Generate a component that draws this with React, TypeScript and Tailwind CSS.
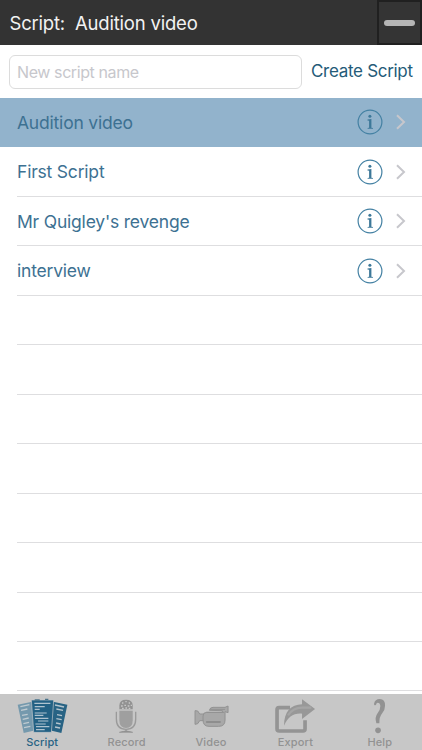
import type { ReactNode } from "react";

const scripts = ["Audition video", "First Script", "Mr Quigley's revenge", "interview"];
const emptyRows = Array.from({ length: 8 }, (_, i) => i);

function InfoIcon() {
  return (
    <svg width="26" height="26" viewBox="0 0 26 26" fill="none">
      <circle cx="13" cy="13" r="11.9" stroke="#4481a3" strokeWidth="1.2" />
      <circle cx="12.9" cy="7.2" r="1.5" fill="#3d7899" />
      <path d="M10.500 10.600l3.900-.5v8.600l1.600.3v.8h-5.400v-.8l1.500-.3v-7l-1.600-.3z" fill="#3d7899" />
    </svg>
  );
}

function Chevron() {
  return (
    <svg width="10" height="16" viewBox="0 0 10 16" fill="none" stroke="#c7c7cc" strokeWidth="2">
      <path d="M1 1.3 8 8 1 14.7" />
    </svg>
  );
}

function ScriptIcon() {
  return (
    <>
      <path d="m53 59 43-9 10 86-35 8z" fill="#7599ad" />
      <path d="m202 59-43-9-10 86 35 8z" fill="#286384" />
      <path d="M61 65l27-6M63 76l19-4M66 91l17-3M68 103l18-4M70 116l17-4M72 128l19-4" stroke="#c0cbd1" strokeWidth="4" />
      <path d="M165 60l27 6M169 72l20 4M171 89l15 3M169 101l16 3M168 114l14 3M165 126l15 3" stroke="#b6c5ce" strokeWidth="4" />
      <path d="M94 45h67l-7 97h-53z" fill="#236184" stroke="#c6c9cb" strokeWidth="2" />
      <path d="M104 43h15v5h-15zM135 41h10v4h-10z" fill="#49748c" />
      <path d="M103 55h48M104 65h30M104 73h15M104 84h36M104 91h26M105 100h40M114 108h31M106 117h31M108 125h40M108 134h26" stroke="#afc3cf" strokeWidth="3.500" />
    </>
  );
}

function RecordIcon() {
  return (
    <>
      <path d="M104 77h40v29q0 23-20 23t-20-23z" fill="#9f9f9f" />
      <path d="M104 73V61q0-17 20-17t20 17v12z" fill="#929292" />
      <path d="M112 54h4M122 50h4M132 54h4M109 63h5M119 61h5M129 63h5M138 61h4M112 70h5M122 69h5M132 70h5" stroke="#c7c7c7" strokeWidth="4" />
      <path d="M104 75h40" stroke="#bababa" strokeWidth="2" />
      <path d="M95 80v22q0 31 29 31t29-31V80M124 132v8" fill="none" stroke="#9a9a9a" strokeWidth="4" />
      <path d="M104 142q20-9 40 0z" fill="#929292" stroke="#929292" strokeWidth="2" />
    </>
  );
}

function VideoIcon() {
  return (
    <>
      <path d="m74 77 8 1 6 9h13v20H88l-6 9-8 2z" fill="#a8a8a8" stroke="#929292" strokeWidth="3" />
      <path d="M117 76q2-9 11-9h36l9-4v20l-9-3v25q0 19-19 19h-29q-18 0-18-19V93q0-11 11-11h47v-5z" fill="#a8a8a8" stroke="#929292" strokeWidth="3" />
      <path d="M119 73h45M108 82h53" stroke="#929292" strokeWidth="3" />
      <path d="M109 111h40" stroke="#858585" strokeWidth="5" strokeLinecap="round" />
    </>
  );
}

function ExportIcon() {
  return (
    <>
      <path d="M115 68H82q-6 0-6 6v58q0 6 6 6h72q6 0 6-6v-26" fill="none" stroke="#949494" strokeWidth="11" />
      <path d="M97 122c0-42 20-63 54-64V43l39 29-39 30V86c-27-2-42 10-54 36z" fill="#989898" />
      <path d="M109 91q15-23 42-23h28" fill="none" stroke="#a5a5a5" strokeWidth="7" />
    </>
  );
}

function HelpIcon() {
  return (
    <>
      <path d="M110 56q3-14 17-14 17 1 16 20 0 12-8 22-10 12-9 31h-9q-6-18 4-31 8-10 8-21-1-10-8-10-4 0-5 6-6 5-6-3z" fill="#929292" />
      <circle cx="122" cy="136" r="8.500" fill="#929292" />
    </>
  );
}

interface TabProps {
  label: string;
  view: string;
  active?: boolean;
  children: ReactNode;
}

function Tab({ label, view, active = false, children }: TabProps) {
  return (
    <button className={`flex min-w-0 flex-1 flex-col items-center ${active ? "text-[#286384]" : "text-[#929292]"}`}>
      <svg className="h-[41px] w-full shrink-0" viewBox={view} aria-hidden="true">
        {children}
      </svg>
      <span className="text-[11px] font-medium leading-[14px] tracking-[0.15px]">{label}</span>
    </button>
  );
}

export default function App() {
  return (
    <main className="flex h-[750px] w-[422px] flex-col overflow-hidden bg-white font-[Inter,sans-serif]">
      <header className="flex h-[45px] shrink-0 items-center justify-between bg-[#333]">
        <h1 className="whitespace-pre pl-[9.500px] pt-[2px] text-[18.500px] tracking-[-0.200px] text-[#f2f2f2]">Script:  Audition video</h1>
        <button aria-label="Collapse" className="flex h-[45px] w-[45px] items-center justify-center border-2 border-[#202020] bg-[#343434]">
          <span className="h-[6px] w-[31px] rounded-full bg-[#b5b5b5]" />
        </button>
      </header>
      <div className="flex h-[53px] shrink-0 items-center pl-[9px]">
        <input
          placeholder="New script name"
          className="h-[34px] w-[293px] rounded-[6px] border border-[#dcdcdc] px-[7px] text-[16px] tracking-[-0.400px] placeholder:text-[#c7c7cc]"
        />
        <button className="ml-[9px] whitespace-nowrap pt-px text-[17px] tracking-[-0.3px] text-[#245b78]">Create Script</button>
      </div>
      <ul className="min-h-0 flex-1 overflow-hidden">
        {scripts.map((name, i) => (
          <li key={name} className={`h-[49.460px] pl-[17px] ${i === 0 ? "bg-[#92b3cc]" : ""}`}>
            <div className={`flex h-full items-center border-b ${i === 0 ? "border-[#92b3cc]" : "border-[#dedee0]"}`}>
              <span className="flex-1 pt-px text-[17.500px] tracking-[-0.200px] text-[#3d7192]">{name}</span>
              <InfoIcon />
              <span className="ml-[13px] mr-[16px]"><Chevron /></span>
            </div>
          </li>
        ))}
        {emptyRows.map((i) => (
          <li key={i} className="h-[49.460px] pl-[17px]">
            <div className="h-full border-b border-[#dedee0]" />
          </li>
        ))}
      </ul>
      <nav className="flex h-14 shrink-0 bg-[#c7c7c7]">
        <Tab label="Script" view="0 27 253 123" active><ScriptIcon /></Tab>
        <Tab label="Record" view="-2 27 253 123"><RecordIcon /></Tab>
        <Tab label="Video" view="-4 27 253 123"><VideoIcon /></Tab>
        <Tab label="Export" view="4 27 253 123"><ExportIcon /></Tab>
        <Tab label="Help" view="2 27 253 123"><HelpIcon /></Tab>
      </nav>
    </main>
  );
}
